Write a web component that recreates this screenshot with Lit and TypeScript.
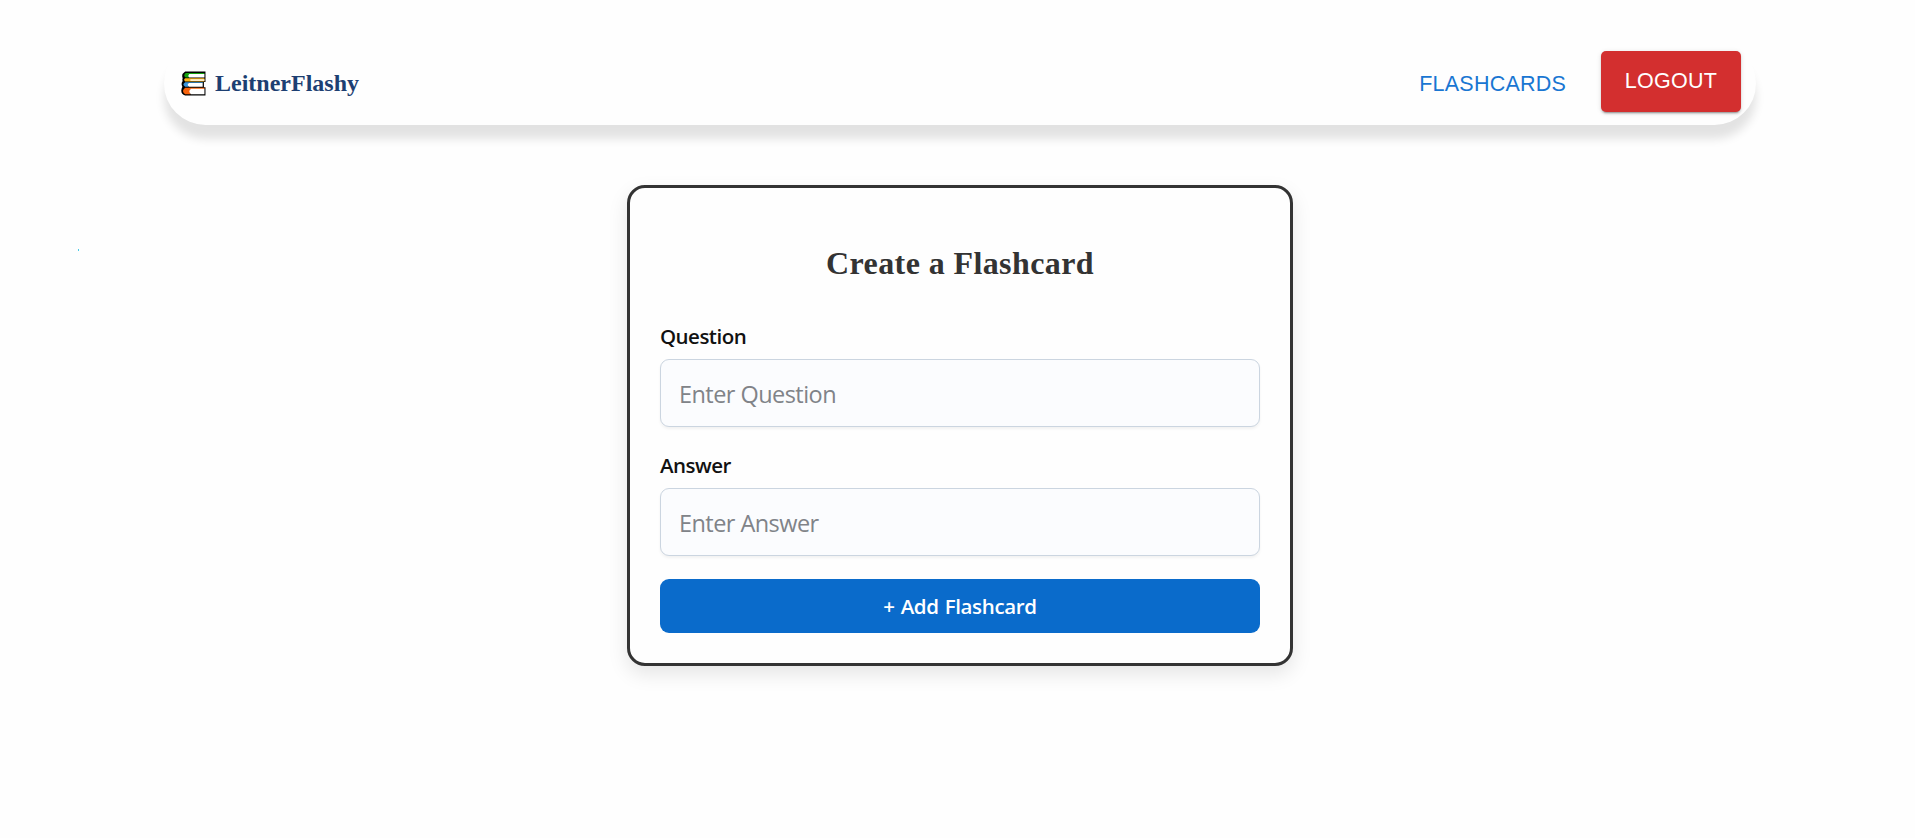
import { LitElement, html, css } from "lit";
import { customElement } from "lit/decorators.js";

@customElement("app-root")
class AppRoot extends LitElement {
  static styles = css`
    :host { display: block; position: relative; height: 838px; background: #fefefe; overflow: hidden; box-sizing: border-box; padding-top: 42px; }
    * { box-sizing: border-box; }
    .nav { width: 1592px; height: 83px; margin: 0 0 0 164px; padding: 9px 15px 0 17px; display: flex; justify-content: space-between; align-items: flex-start; border-radius: 42px; background: #fefefe; box-shadow: 0 14px 10px rgba(0,0,0,.11); }
    .brand { display: flex; align-items: center; height: 64px; gap: 9px; font: bold 24px/28px "Liberation Serif", serif; color: #1d3f72; }
    .books { display: block; width: 25px; height: 25px; }
    .links { display: flex; align-items: flex-start; gap: 35px; font: 21.5px/36px "Liberation Sans", sans-serif; }
    .link { color: #1976d2; padding-top: 15px; letter-spacing: .22px; }
    .logout { width: 140px; height: 61px; border: 0; padding: 0 0 2px; border-radius: 5px; background: #d32f2f; color: #fff; font: inherit; letter-spacing: .25px; box-shadow: 0 3px 1px -2px rgba(0,0,0,.2), 0 2px 2px rgba(0,0,0,.14), 0 1px 5px rgba(0,0,0,.12); }
    .card { width: 666px; height: 481px; margin: 60px 0 0 627px; border: 3px solid #333; border-radius: 18px; padding: 0 30px; display: flex; flex-direction: column; background: #fefefe; box-shadow: 0 8px 20px rgba(0,0,0,.1); }
    .title { margin: 55px 0 0; text-align: center; font: bold 32px/40px "Liberation Serif", serif; letter-spacing: .4px; color: #333; }
    .label { font: 600 20.5px/28px "Open Sans", sans-serif; letter-spacing: -.52px; color: #111; }
    .field { width: 600px; height: 68px; border: 1px solid #cbd5e0; border-radius: 9px; background: #fbfcfe; padding: 2px 18px 0; font: 23.5px/32px "Open Sans", sans-serif; letter-spacing: -.55px; box-shadow: 0 2px 3px rgba(0,0,0,.05); outline: 0; margin: 9px 0 0; }
    .field::placeholder { color: #808388; opacity: 1; }
    .q { margin-top: 39px; }
    .a { margin-top: 24px; }
    .add { width: 600px; height: 54px; margin: 23px 0 0; border: 0; border-radius: 9px; background: #0a6bcb; color: #fff; font: 600 20.5px/28px "Open Sans", sans-serif; letter-spacing: -.35px; word-spacing: 1px; }
    .speck { position: absolute; left: 78px; top: 249px; width: 1px; height: 2px; background: #48cbe6; }
  `;
  render() {
    return html`
      <nav class="nav">
        <div class="brand">
          <svg class="books" viewBox="0 0 24 24">
            <path d="M4 .5H23.500V6.500V10.500H22V15.500H23.500V23.500H4Q0 22.500 .3 18.500Q.5 16.500 1.300 15Q-.3 12 1.600 9.500Q1 8.500 1.600 7Q0 3 4 .5Z" fill="#000"/>
            <path d="M4.500 1.900H22.500V2.900H8V6.200H4.500Q1.700 4.500 4.500 1.900Z" fill="#13a10e"/>
            <path d="M8 2.800H22.500V6.200H8Q6 4.500 8 2.800Z" fill="#fff"/>
            <path d="M4 7H22.500V10H4Q2 8.500 4 7Z" fill="#fcb516"/>
            <path d="M9 8H22.500V9.400H9Z" fill="#fff"/>
            <path d="M4 10.800H21V11.600H7V15H4Q.5 13 4 10.800Z" fill="#3a96dd"/>
            <path d="M7.500 11.400H20.800V15H7.500Q5.500 13 7.500 11.400Z" fill="#fff"/>
            <path d="M4 16.100H22.500V17.200H9V22.400H4Q-.2 19.300 4 16.100Z" fill="#f7630c"/>
            <path d="M9.500 17.100H22.500V22.200H9.500Q6.500 19.700 9.500 17.100Z" fill="#fff"/>
          </svg>
          <span class="name">LeitnerFlashy</span>
        </div>
        <div class="links"><a class="link">FLASHCARDS</a><button class="logout">LOGOUT</button></div>
      </nav>
      <main class="card">
        <h2 class="title">Create a Flashcard</h2>
        <label class="label q">Question</label>
        <input class="field" placeholder="Enter Question">
        <label class="label a">Answer</label>
        <input class="field" placeholder="Enter Answer">
        <button class="add">+ Add Flashcard</button>
      </main>
      <span class="speck"></span>`;
  }
}
